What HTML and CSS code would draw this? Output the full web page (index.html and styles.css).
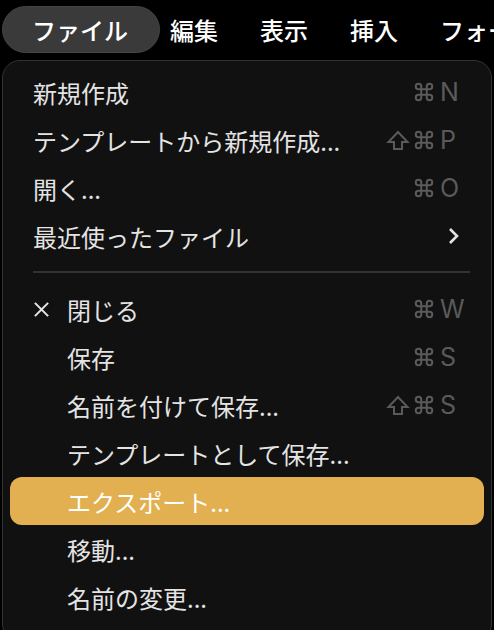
FILE: index.html
```html
<!DOCTYPE html>
<html lang="ja">
<head>
<meta charset="UTF-8">
<meta name="viewport" content="width=device-width, initial-scale=1.0">
<title>ファイル</title>
<link rel="stylesheet" href="styles.css">
</head>
<body>
<div class="menubar">
    <span class="menu-title active">ファイル</span>
    <span class="menu-title">編集</span>
    <span class="menu-title">表示</span>
    <span class="menu-title">挿入</span>
    <span class="menu-title">フォーマット</span>
</div>

<div class="menu">
    <div class="menu-item">
        <span class="label">新規作成</span>
        <span class="shortcut">
            <svg class="cmd" viewBox="0 0 24 24"><path d="M15 6v12a3 3 0 1 0 3-3H6a3 3 0 1 0 3 3V6a3 3 0 1 0-3 3h12a3 3 0 1 0-3-3"/></svg>
            <span class="key">N</span>
        </span>
    </div>
    <div class="menu-item">
        <span class="label">テンプレートから新規作成...</span>
        <span class="shortcut">
            <svg class="shift" viewBox="0 0 24 22"><path d="M8 20v-7H2.5l9.5-10 9.5 10H16v7H8z"/></svg>
            <svg class="cmd" viewBox="0 0 24 24"><path d="M15 6v12a3 3 0 1 0 3-3H6a3 3 0 1 0 3 3V6a3 3 0 1 0-3 3h12a3 3 0 1 0-3-3"/></svg>
            <span class="key">P</span>
        </span>
    </div>
    <div class="menu-item">
        <span class="label">開く...</span>
        <span class="shortcut">
            <svg class="cmd" viewBox="0 0 24 24"><path d="M15 6v12a3 3 0 1 0 3-3H6a3 3 0 1 0 3 3V6a3 3 0 1 0-3 3h12a3 3 0 1 0-3-3"/></svg>
            <span class="key">O</span>
        </span>
    </div>
    <div class="menu-item">
        <span class="label">最近使ったファイル</span>
        <span class="shortcut">
            <svg class="chevron" viewBox="0 0 12 18"><path d="M2 2l7 7-7 7"/></svg>
        </span>
    </div>

    <div class="separator"></div>

    <div class="menu-item">
        <span class="check">
            <svg viewBox="0 0 18 18"><path d="M2 2l14 14M16 2L2 16"/></svg>
        </span>
        <span class="label">閉じる</span>
        <span class="shortcut">
            <svg class="cmd" viewBox="0 0 24 24"><path d="M15 6v12a3 3 0 1 0 3-3H6a3 3 0 1 0 3 3V6a3 3 0 1 0-3 3h12a3 3 0 1 0-3-3"/></svg>
            <span class="key">W</span>
        </span>
    </div>
    <div class="menu-item">
        <span class="check"></span>
        <span class="label">保存</span>
        <span class="shortcut">
            <svg class="cmd" viewBox="0 0 24 24"><path d="M15 6v12a3 3 0 1 0 3-3H6a3 3 0 1 0 3 3V6a3 3 0 1 0-3 3h12a3 3 0 1 0-3-3"/></svg>
            <span class="key">S</span>
        </span>
    </div>
    <div class="menu-item">
        <span class="check"></span>
        <span class="label">名前を付けて保存...</span>
        <span class="shortcut">
            <svg class="shift" viewBox="0 0 24 22"><path d="M8 20v-7H2.5l9.5-10 9.5 10H16v7H8z"/></svg>
            <svg class="cmd" viewBox="0 0 24 24"><path d="M15 6v12a3 3 0 1 0 3-3H6a3 3 0 1 0 3 3V6a3 3 0 1 0-3 3h12a3 3 0 1 0-3-3"/></svg>
            <span class="key">S</span>
        </span>
    </div>
    <div class="menu-item">
        <span class="check"></span>
        <span class="label">テンプレートとして保存...</span>
    </div>
    <div class="menu-item selected">
        <span class="check"></span>
        <span class="label">エクスポート...</span>
    </div>
    <div class="menu-item">
        <span class="check"></span>
        <span class="label">移動...</span>
    </div>
    <div class="menu-item">
        <span class="check"></span>
        <span class="label">名前の変更...</span>
    </div>
</div>
</body>
</html>
```

FILE: styles.css
```css
html, body {
    margin: 0;
    height: 100%;
    overflow: hidden;
}

body {
    background-color: #000;
    font-family: "Noto Sans CJK JP", "Noto Sans", sans-serif;
    color: #e4e4e4;
}

.menubar {
    display: flex;
    align-items: center;
    padding: 6px 0 0 2px;
    white-space: nowrap;
}

.menu-title {
    height: 47px;
    line-height: 47px;
    padding: 0 21px;
    font-size: 24px;
    font-weight: 500;
    color: #fff;
    box-sizing: border-box;
}

.menu-title.active {
    padding: 0 31px 0 29px;
    background-color: #3a3a3a;
    border: 1px solid #444;
    border-radius: 24px;
    line-height: 45px;
}

.menu-title.active + .menu-title {
    padding-left: 10px;
}

.menu {
    margin: 7px 2px 0 2px;
    padding: 7px 0 20px;
    background-color: #111;
    border: 1px solid #333;
    border-radius: 18px;
}

.menu-item {
    display: flex;
    align-items: center;
    height: 48px;
    margin: 0 7px;
    padding: 0 20px 0 23px;
    font-size: 24px;
    border-radius: 12px;
    white-space: nowrap;
}

.menu-item .label {
    flex: 1;
}

.menu-item.selected {
    background-color: #e2b050;
    color: #fff;
}

.check {
    width: 34px;
    display: flex;
    align-items: center;
}

.check svg {
    width: 17px;
    height: 17px;
    fill: none;
    stroke: #e4e4e4;
    stroke-width: 2.2;
}

.shortcut {
    display: flex;
    align-items: center;
    color: #5a5a5a;
}

.cmd {
    width: 22px;
    height: 22px;
    margin-right: 5px;
    fill: none;
    stroke: #5a5a5a;
    stroke-width: 2.2;
}

.shift {
    width: 24px;
    height: 22px;
    margin-right: 3px;
    fill: none;
    stroke: #5a5a5a;
    stroke-width: 2;
}

.key {
    width: 24px;
    font-family: "Inter", "Liberation Sans", sans-serif;
    font-size: 25px;
}

.chevron {
    width: 12px;
    height: 18px;
    margin-right: 4px;
    fill: none;
    stroke: #e4e4e4;
    stroke-width: 2.6;
}

.separator {
    height: 2px;
    margin: 11px 21px 12px 30px;
    background-color: #333;
}
```
